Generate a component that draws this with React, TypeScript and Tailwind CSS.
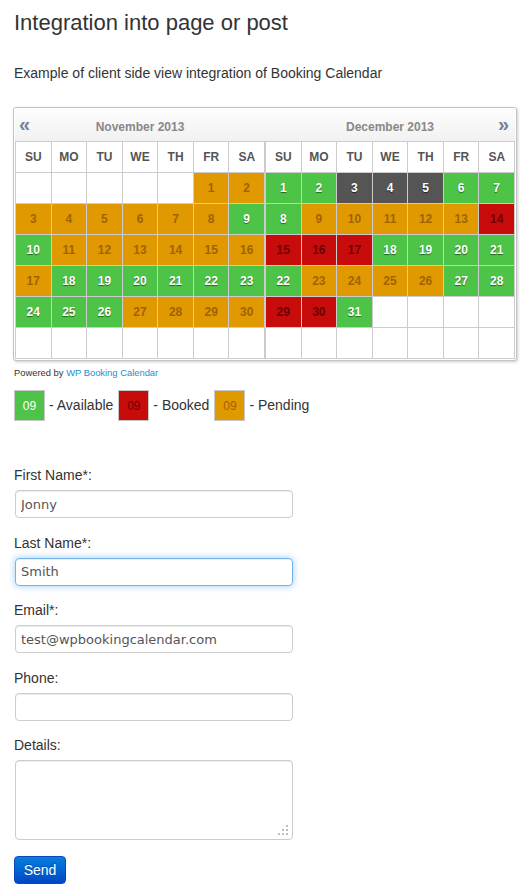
type Status = 'a' | 'p' | 'b' | 'u';

interface Month {
  title: string;
  offset: number;
  days: string;
  arrow: 'prev' | 'next';
}

const months: Month[] = [
  { title: 'November 2013', offset: 5, days: 'ppppppppaapppppppaaaaaaaaapppp', arrow: 'prev' },
  { title: 'December 2013', offset: 0, days: 'aauuuaaapppppbbbbaaaaappppaabba', arrow: 'next' },
];

const dayNames = ['SU', 'MO', 'TU', 'WE', 'TH', 'FR', 'SA'];

const cellStyle: Record<Status, string> = {
  a: 'bg-[#4dc447] text-white [text-shadow:0_1px_1px_rgba(0,0,0,0.5)]',
  p: 'bg-[#e09900] text-[#a06300]',
  b: 'bg-[#c80c0c] text-[#6e0000]',
  u: 'bg-[#555555] text-white [text-shadow:0_1px_1px_rgba(0,0,0,0.6)]',
};

function MonthView({ month }: { month: Month }) {
  const cells: ({ day: number; status: Status } | null)[] = [];
  for (let i = 0; i < 42; i++) {
    const day = i - month.offset + 1;
    if (day >= 1 && day <= month.days.length) {
      cells.push({ day, status: month.days[day - 1] as Status });
    } else {
      cells.push(null);
    }
  }

  return (
    <div className="w-[250px]">
      {/* Month header */}
      <div className="relative h-[33px] pt-[11px] bg-gradient-to-b from-[#fdfdfd] to-[#f1f1f1] text-center text-[12px] leading-4 font-bold text-[#888]">
        {month.arrow === 'prev' ? (
          <span className="absolute left-[4px] top-[6px] text-[20px] leading-[20px] font-bold text-[#71849c]">«</span>
        ) : (
          <span className="absolute right-[6px] top-[6px] text-[20px] leading-[20px] font-bold text-[#71849c]">»</span>
        )}
        {month.title}
      </div>

      {/* Days grid */}
      <div className="grid grid-cols-7 auto-rows-[30px] gap-px bg-[#cccccc] border border-[#cccccc]">
        {dayNames.map((d) => (
          <div key={d} className="bg-white flex items-center justify-center text-[12px] font-bold text-[#555]">
            {d}
          </div>
        ))}
        {cells.map((c, i) =>
          c ? (
            <div
              key={i}
              className={`flex items-center justify-center text-[12px] font-bold ${cellStyle[c.status]}`}
            >
              {c.day}
            </div>
          ) : (
            <div key={i} className="bg-white" />
          )
        )}
      </div>
    </div>
  );
}

function LegendItem({ label, box }: { label: string; box: string }) {
  return (
    <div className="flex items-center gap-1">
      <div className={`w-[31px] h-[31px] border border-[#c8c8c8] flex items-center justify-center text-[12px] ${box}`}>
        09
      </div>
      <span className="text-[14px]">- {label}</span>
    </div>
  );
}

function Field({
  label,
  value,
  focused,
}: {
  label: string;
  value: string;
  focused?: boolean;
}) {
  return (
    <div className="mb-[14.5px]">
      <label className="block text-[14px] leading-[20px] mb-[5px]">{label}</label>
      <input
        readOnly
        value={value}
        className={`ml-px block w-[278px] h-[28px] rounded-[4px] border px-[5px] font-['DejaVu_Sans',sans-serif] text-[13px] text-[#555] outline-none ${
          focused
            ? 'border-[#74b4ea] shadow-[inset_0_1px_1px_rgba(0,0,0,0.075),0_0_7px_rgba(82,168,236,0.6)]'
            : 'border-[#cccccc] shadow-[inset_0_1px_1px_rgba(0,0,0,0.075)]'
        }`}
      />
    </div>
  );
}

export default function App() {
  return (
    <div className="min-h-screen bg-white pl-[14px] font-['Liberation_Sans',Arial,sans-serif] text-[#333]">
      <h1 className="pt-[10px] text-[22px] leading-[25px] font-normal">Integration into page or post</h1>
      <p className="mt-[28px] text-[14px] leading-[20px]">
        Example of client side view integration of Booking Calendar
      </p>

      {/* Booking calendar */}
      <div className="-ml-px mt-[24px] w-[504px] rounded-[3px] border border-[#c4c4c4] bg-white px-px pb-px shadow-[1px_1px_3px_rgba(0,0,0,0.2)]">
        <div className="flex">
          {months.map((m) => (
            <MonthView key={m.title} month={m} />
          ))}
        </div>
      </div>

      <div className="mt-[6px] text-[9.4px] leading-[12px] text-[#333]">
        Powered by <span className="text-[#1a8fd6]">WP Booking Calendar</span>
      </div>

      {/* Legend */}
      <div className="mt-[11px] flex items-center gap-[5px]">
        <LegendItem label="Available" box="bg-[#4dc447] text-white" />
        <LegendItem label="Booked" box="bg-[#c80c0c] text-[#6e0000]" />
        <LegendItem label="Pending" box="bg-[#e09900] text-[#a06300]" />
      </div>

      {/* Booking form */}
      <form className="mt-[44px]">
        <Field label="First Name*:" value="Jonny" />
        <Field label="Last Name*:" value="Smith" focused />
        <Field label="Email*:" value="test@wpbookingcalendar.com" />
        <Field label="Phone:" value="" />
        <div>
          <label className="block text-[14px] leading-[20px] mb-[5px]">Details:</label>
          <div className="relative ml-px w-[278px]">
            <textarea
              readOnly
              className="block w-[278px] h-[80px] resize-none rounded-[4px] border border-[#cccccc] px-[5px] shadow-[inset_0_1px_1px_rgba(0,0,0,0.075)] outline-none"
            />
            {/* resize grip */}
            <svg className="absolute right-[4px] bottom-[4px]" width="11" height="11" viewBox="0 0 11 11">
              <g fill="#bdbdbd">
                <rect x="8" y="0" width="2" height="2" />
                <rect x="4" y="4" width="2" height="2" />
                <rect x="8" y="4" width="2" height="2" />
                <rect x="0" y="8" width="2" height="2" />
                <rect x="4" y="8" width="2" height="2" />
                <rect x="8" y="8" width="2" height="2" />
              </g>
            </svg>
          </div>
        </div>
        <button
          type="button"
          className="mt-[16px] w-[52px] h-[28px] rounded-[4px] border border-[#0a48b8] bg-gradient-to-b from-[#0a7fdc] to-[#0046c6] text-[14px] text-white [text-shadow:0_-1px_0_rgba(0,0,0,0.25)]"
        >
          Send
        </button>
      </form>
    </div>
  );
}
